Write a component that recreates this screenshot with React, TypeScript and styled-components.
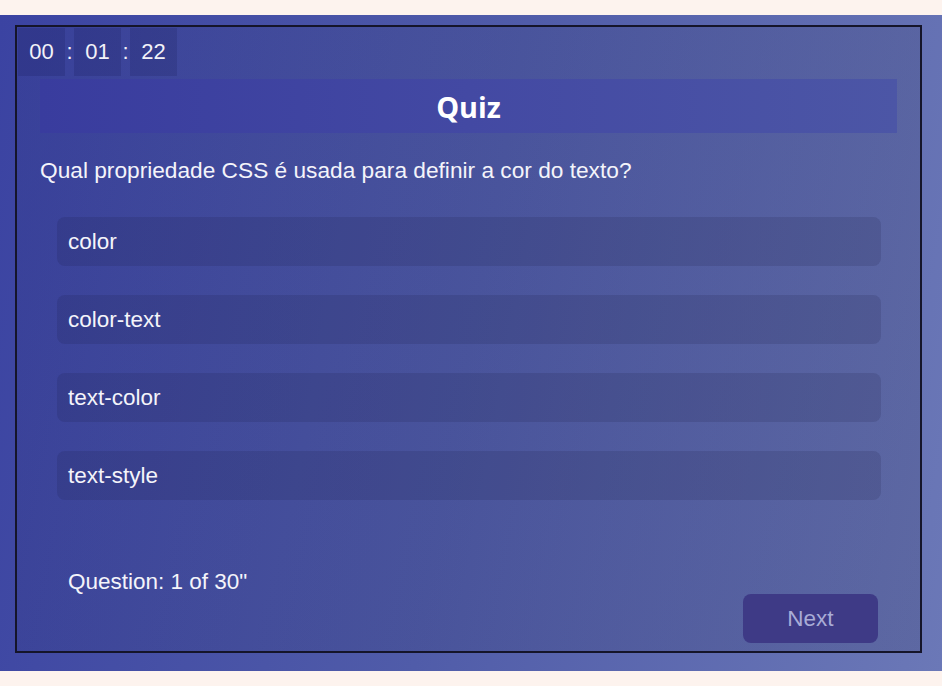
import styled, { createGlobalStyle } from "styled-components";

const GlobalStyle = createGlobalStyle`
  body {
    margin: 0;
    background: #fdf3ee;
    font-family: "Liberation Sans", Arial, sans-serif;
  }
`;

const options = ["color", "color-text", "text-color", "text-style"];
const timer = ["00", "01", "22"];

export default function App() {
  return (
    <>
      <GlobalStyle />
      <Page>
        <Backdrop>
          <Card>
            <TimerRow>
              {timer.map((value, i) => (
                <TimerGroup key={i}>
                  {i > 0 && <Colon>:</Colon>}
                  <TimerCell>{value}</TimerCell>
                </TimerGroup>
              ))}
            </TimerRow>
            <Main>
              <Header>Quiz</Header>
              <QuestionText>
                Qual propriedade CSS é usada para definir a cor do texto?
              </QuestionText>
              <OptionList>
                {options.map((option) => (
                  <Option key={option}>{option}</Option>
                ))}
              </OptionList>
              <Footer>
                <Counter>Question: 1 of 30"</Counter>
                <NextButton>Next</NextButton>
              </Footer>
            </Main>
          </Card>
        </Backdrop>
      </Page>
    </>
  );
}

const Page = styled.div`
  padding: 15px 0;
`;

const Backdrop = styled.div`
  background: linear-gradient(100deg, #3b43a2 0%, #505ca9 50%, #6b78b7 100%);
  padding: 10px 20px 18px 15px;
`;

const Card = styled.div`
  height: 628px;
  box-sizing: border-box;
  border: 2px solid #15152a;
  background: linear-gradient(
    110deg,
    rgba(0, 0, 20, 0.06) 0%,
    rgba(10, 10, 40, 0.1) 50%,
    rgba(20, 20, 50, 0.15) 100%
  );
  padding: 1px;
  display: flex;
  flex-direction: column;
`;

const TimerRow = styled.div`
  display: flex;
  align-items: center;
  height: 48px;
`;

const TimerGroup = styled.div`
  display: flex;
  align-items: center;
`;

const TimerCell = styled.div`
  width: 47px;
  height: 48px;
  display: flex;
  align-items: center;
  justify-content: center;
  background: rgba(10, 10, 60, 0.14);
  color: #f2f2f8;
  font-size: 22px;
`;

const Colon = styled.span`
  width: 9px;
  text-align: center;
  color: #f2f2f8;
  font-size: 22px;
`;

const Main = styled.div`
  flex: 1;
  display: flex;
  flex-direction: column;
  padding: 3px 22px 7px 22px;
`;

const Header = styled.h1`
  margin: 0;
  height: 54px;
  display: flex;
  align-items: center;
  justify-content: center;
  background: linear-gradient(90deg, #393c9e 0%, #4349a3 50%, #4c56a6 100%);
  color: #ffffff;
  font-family: "Open Sans", sans-serif;
  font-size: 28.8px;
  font-weight: 700;
`;

const QuestionText = styled.p`
  margin: 24px 0 0 0;
  color: #f4f4fa;
  font-size: 22.7px;
  line-height: 26px;
`;

const OptionList = styled.div`
  display: flex;
  flex-direction: column;
  gap: 29px;
  margin-top: 34px;
  padding: 0 16px 0 17px;
`;

const Option = styled.div`
  height: 49px;
  display: flex;
  align-items: center;
  padding-left: 11px;
  border-radius: 8px;
  background: rgba(20, 20, 60, 0.14);
  color: #f4f4fa;
  font-size: 22.5px;
`;

const Footer = styled.div`
  margin-top: auto;
  display: flex;
  justify-content: space-between;
  align-items: flex-end;
  padding: 0 19px 0 28px;
`;

const Counter = styled.span`
  color: #f4f4fa;
  font-size: 22.5px;
  margin-bottom: 48px;
`;

const NextButton = styled.button`
  width: 135px;
  height: 49px;
  border: none;
  border-radius: 8px;
  background: #3e3a86;
  color: #a9acd6;
  font-family: "Liberation Sans", Arial, sans-serif;
  font-size: 22.5px;
`;
